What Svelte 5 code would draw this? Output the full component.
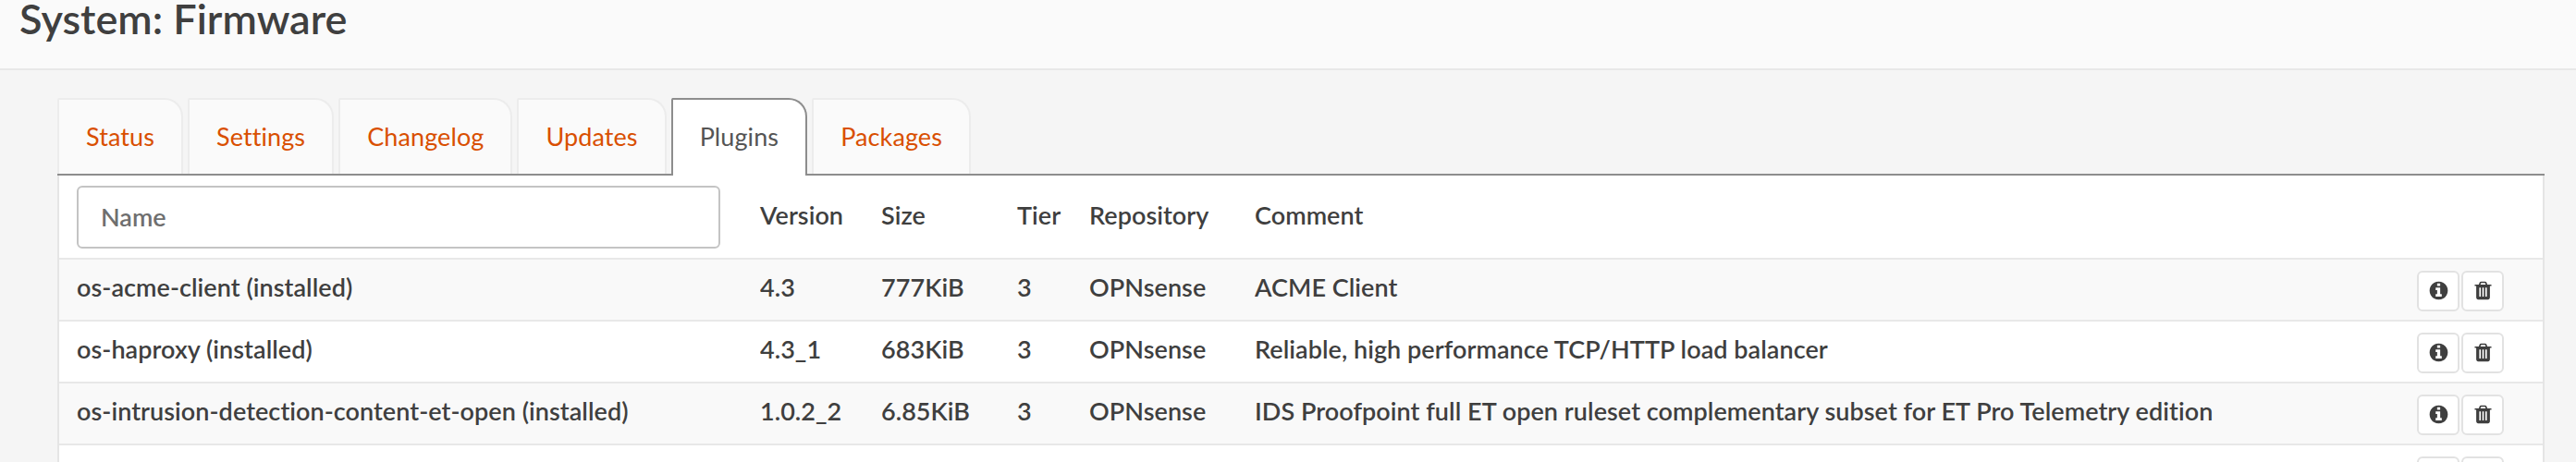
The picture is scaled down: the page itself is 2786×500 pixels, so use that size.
<script>
  const tabs = ['Status', 'Settings', 'Changelog', 'Updates', 'Plugins', 'Packages'];
  const rows = [
    { name: 'os-acme-client (installed)', version: '4.3', size: '777KiB', tier: '3', repo: 'OPNsense', comment: 'ACME Client' },
    { name: 'os-haproxy (installed)', version: '4.3_1', size: '683KiB', tier: '3', repo: 'OPNsense', comment: 'Reliable, high performance TCP/HTTP load balancer' },
    { name: 'os-intrusion-detection-content-et-open (installed)', version: '1.0.2_2', size: '6.85KiB', tier: '3', repo: 'OPNsense', comment: 'IDS Proofpoint full ET open ruleset complementary subset for ET Pro Telemetry edition' },
    { name: '', version: '', size: '', tier: '', repo: '', comment: '' }
  ];
</script>

<header class="page-head">
  <h1>System: Firmware</h1>
</header>

<main class="content">
  <ul class="tabs">
    {#each tabs as tab}
      <li class="tab" class:active={tab === 'Plugins'}>{tab}</li>
    {/each}
  </ul>

  <div class="panel">
    <table>
      <colgroup>
        <col class="c-name" />
        <col class="c-version" />
        <col class="c-size" />
        <col class="c-tier" />
        <col class="c-repo" />
        <col />
        <col class="c-actions" />
      </colgroup>
      <thead>
        <tr>
          <th><input class="search" placeholder="Name" /></th>
          <th>Version</th>
          <th>Size</th>
          <th>Tier</th>
          <th>Repository</th>
          <th>Comment</th>
          <th></th>
        </tr>
      </thead>
      <tbody>
        {#each rows as row}
          <tr>
            <td>{row.name}</td>
            <td>{row.version}</td>
            <td>{row.size}</td>
            <td>{row.tier}</td>
            <td>{row.repo}</td>
            <td>{row.comment}</td>
            <td class="action-cell">
              <div class="actions">
                <button aria-label="Info">
                  <svg viewBox="0 0 1792 1792" width="23" height="23"><path fill="#3f3f3f" d="M1152 1376v-160q0-14-9-23t-23-9h-96v-512q0-14-9-23t-23-9h-320q-14 0-23 9t-9 23v160q0 14 9 23t23 9h96v320h-96q-14 0-23 9t-9 23v160q0 14 9 23t23 9h448q14 0 23-9t9-23zm-128-896v-160q0-14-9-23t-23-9h-192q-14 0-23 9t-9 23v160q0 14 9 23t23 9h192q14 0 23-9t9-23zm640 416q0 209-103 385.500t-279.500 279.500-385.500 103-385.500-103-279.500-279.500-103-385.500 103-385.500 279.500-279.500 385.500-103 385.500 103 279.500 279.500 103 385.500z"/></svg>
                </button>
                <button aria-label="Remove">
                  <svg viewBox="0 0 1792 1792" width="23" height="23"><path fill="#3f3f3f" d="M704 1376v-704q0-14-9-23t-23-9h-64q-14 0-23 9t-9 23v704q0 14 9 23t23 9h64q14 0 23-9t9-23zm256 0v-704q0-14-9-23t-23-9h-64q-14 0-23 9t-9 23v704q0 14 9 23t23 9h64q14 0 23-9t9-23zm256 0v-704q0-14-9-23t-23-9h-64q-14 0-23 9t-9 23v704q0 14 9 23t23 9h64q14 0 23-9t9-23zm-544-992h448l-48-117q-7-9-17-11h-317q-10 2-17 11zm928 32v64q0 14-9 23t-23 9h-96v948q0 83-47 143.500t-113 60.500h-832q-66 0-113-58.500t-47-141.500v-952h-96q-14 0-23-9t-9-23v-64q0-14 9-23t23-9h309l70-167q15-37 54-63t79-26h320q40 0 79 26t54 63l70 167h309q14 0 23 9t9 23z"/></svg>
                </button>
              </div>
            </td>
          </tr>
        {/each}
      </tbody>
    </table>
  </div>
</main>

<style>
  :global(body) {
    margin: 0;
    height: 500px;
    overflow: hidden;
    background: #f5f5f5;
    font-family: Lato, sans-serif;
    color: #3f3f3f;
  }

  .page-head {
    height: 74px;
    background: #fafafa;
    border-bottom: 2px solid #e8e8e8;
    padding-left: 21px;
  }

  h1 {
    margin: 0;
    font-size: 45px;
    line-height: 40px;
    font-weight: 600;
  }

  .content {
    padding: 30px 34px 0 62px;
  }

  .tabs {
    display: flex;
    align-items: flex-start;
    gap: 5px;
    list-style: none;
    margin: 0;
    padding: 0;
    height: 82px;
    border-bottom: 2px solid #8d8d8d;
  }

  .tab {
    box-sizing: border-box;
    height: 82px;
    padding: 0 29px;
    line-height: 80px;
    font-size: 27px;
    letter-spacing: 0.1px;
    color: #d94f00;
    background: #fafafa;
    border: solid #ececec;
    border-width: 2px 2px 0 2px;
    border-radius: 2px 20px 0 0;
  }

  .tab.active {
    height: 84px;
    color: #555;
    background: #fff;
    border-color: #8d8d8d;
  }

  .panel {
    background: #fff;
    border-left: 2px solid #e5e5e5;
    border-right: 2px solid #e5e5e5;
  }

  table {
    width: 100%;
    border-collapse: collapse;
    table-layout: fixed;
    font-size: 27px;
    letter-spacing: 0.05px;
    font-weight: 600;
  }

  .c-name { width: 758px; }
  .c-version { width: 131px; }
  .c-size { width: 147px; }
  .c-tier { width: 78px; }
  .c-repo { width: 179px; }
  .c-actions { width: 156px; }

  th {
    box-sizing: border-box;
    text-align: left;
    font-weight: 600;
    height: 90px;
    padding: 0 0 4px;
    border-bottom: 2px solid #e8e8e8;
  }

  th:first-child,
  td:first-child {
    padding-left: 19px;
  }

  td {
    box-sizing: border-box;
    height: 67px;
    padding: 0 0 6px;
    border-bottom: 2px solid #e8e8e8;
    white-space: nowrap;
    overflow: hidden;
  }

  th:first-child,
  td.action-cell {
    padding-bottom: 0;
  }

  tbody tr:nth-child(odd) {
    background: #f9f9f9;
  }

  .search {
    display: block;
    box-sizing: border-box;
    width: 696px;
    height: 68px;
    padding: 0 24px;
    border: 2px solid #c4c4c4;
    border-radius: 6px;
    background: #fff;
    font: inherit;
    font-weight: 600;
    color: #3f3f3f;
  }

  .search::placeholder {
    color: #6f6f6f;
    opacity: 1;
  }

  .actions {
    display: flex;
    justify-content: flex-end;
    gap: 2px;
    padding-right: 42px;
    margin-top: 2px;
  }

  button {
    display: flex;
    align-items: center;
    justify-content: center;
    box-sizing: border-box;
    width: 46px;
    height: 44px;
    padding: 0;
    background: #fff;
    border: 2px solid #e2e2e2;
    border-radius: 6px;
  }
</style>
